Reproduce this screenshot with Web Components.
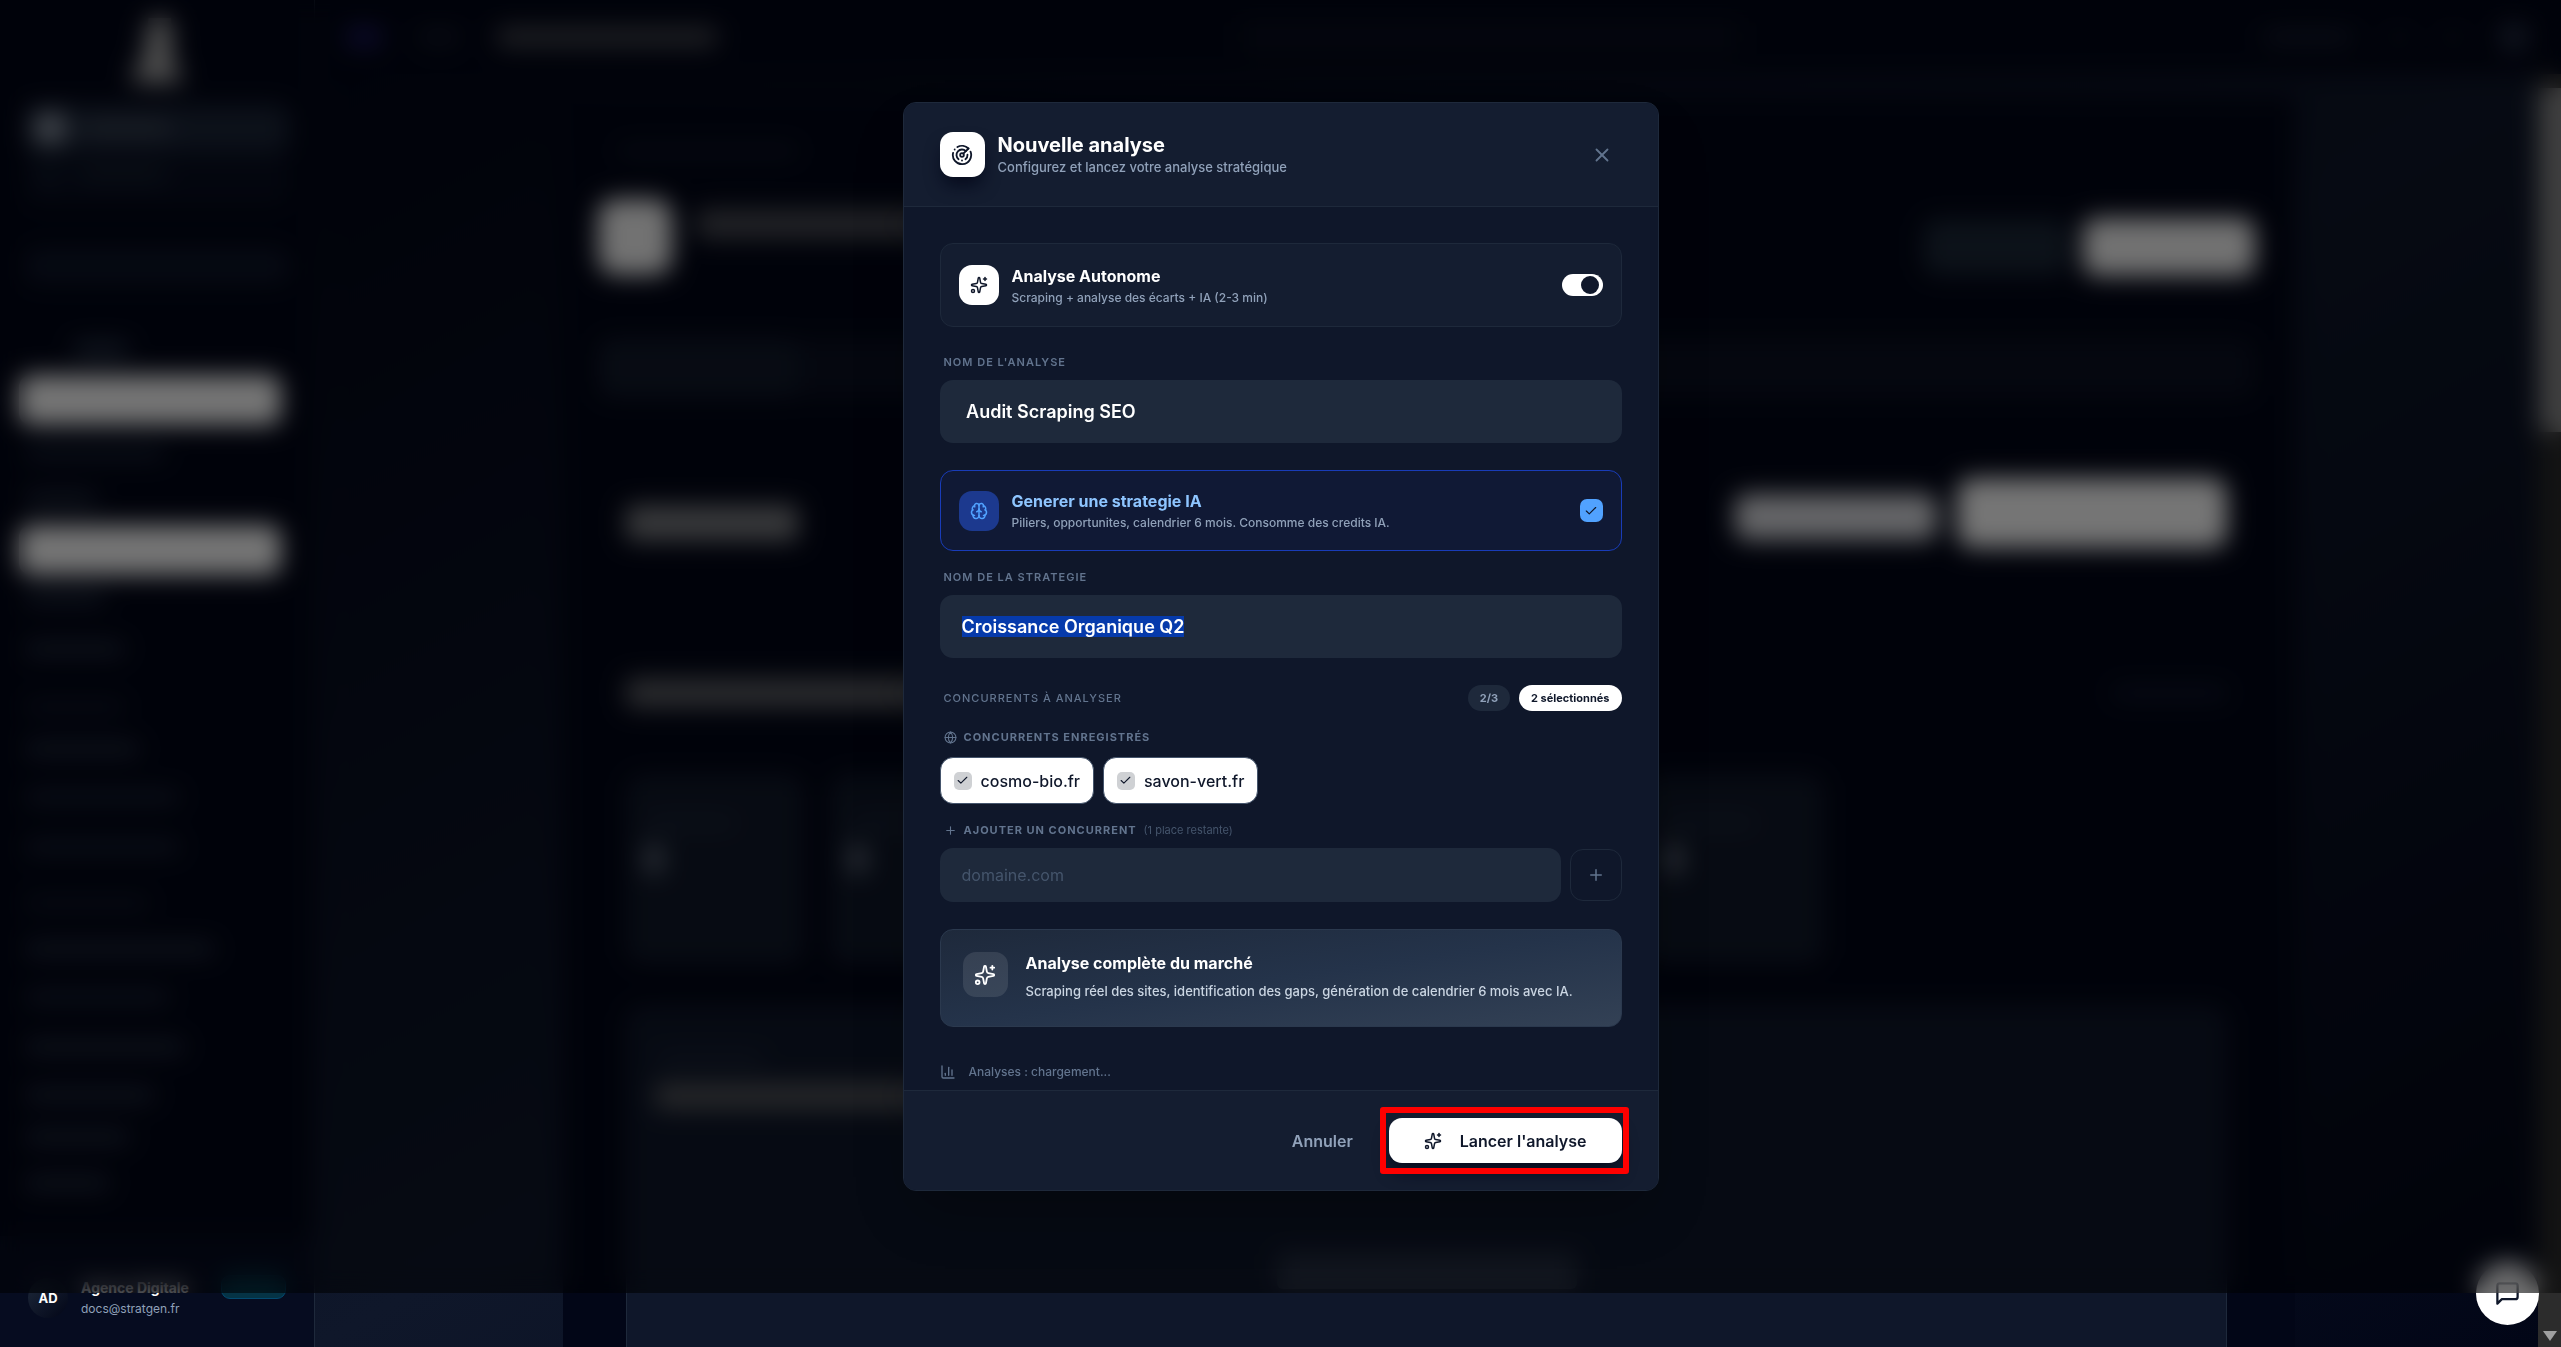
<!DOCTYPE html>
<html lang="fr">
<head>
<meta charset="utf-8">
<title>Nouvelle analyse</title>
<style>
	html, body {
		margin: 0;
		height: 100%;
		overflow: hidden;
	}
	body {
		position: relative;
		background: #020617;
		color: #ffffff;
		font-family: Inter, "Liberation Sans", sans-serif;
	}
</style>
</head>
<body>
<app-shell></app-shell>
<modal-dialog>
	<option-card icon="sparkles" control="switch" heading="Analyse Autonome" detail="Scraping + analyse des écarts + IA (2-3 min)"></option-card>
	<text-field label="Nom de l'analyse" value=" Audit Scraping SEO"></text-field>
	<div class="group">
		<option-card variant="blue" icon="brain" control="check" heading="Generer une strategie IA" detail="Piliers, opportunites, calendrier 6 mois. Consomme des credits IA."></option-card>
		<text-field label="Nom de la strategie" value="Croissance Organique Q2" selected></text-field>
	</div>
	<competitor-picker></competitor-picker>
	<info-banner heading="Analyse complète du marché">Scraping réel des sites, identification des gaps, génération de calendrier 6 mois avec IA.</info-banner>
	<quota-line slot="status">Analyses : chargement...</quota-line>
</modal-dialog>

<script>
const icons = {
	radar: '<path d="M19.07 4.93A10 10 0 0 0 6.99 3.34"/><path d="M4 6h.01"/><path d="M2.29 9.62A10 10 0 1 0 21.31 8.35"/><path d="M16.24 7.76A6 6 0 1 0 8.23 16.67"/><path d="M12 18h.01"/><path d="M17.99 11.66A6 6 0 0 1 15.77 16.67"/><circle cx="12" cy="12" r="2"/><path d="m13.41 10.59 5.66-5.66"/>',
	sparkles: '<path d="M11.017 2.814a1 1 0 0 1 1.966 0l1.051 5.558a2 2 0 0 0 1.594 1.594l5.558 1.051a1 1 0 0 1 0 1.966l-5.558 1.051a2 2 0 0 0-1.594 1.594l-1.051 5.558a1 1 0 0 1-1.966 0l-1.051-5.558a2 2 0 0 0-1.594-1.594l-5.558-1.051a1 1 0 0 1 0-1.966l5.558-1.051a2 2 0 0 0 1.594-1.594z"/><path d="M20 2v4"/><path d="M22 4h-4"/><circle cx="4" cy="20" r="2"/>',
	brain: '<path d="M12 18V5"/><path d="M15 13a4.17 4.17 0 0 1-3-4 4.17 4.17 0 0 1-3 4"/><path d="M17.598 6.5A3 3 0 1 0 12 5a3 3 0 1 0-5.598 1.5"/><path d="M17.997 5.125a4 4 0 0 1 2.526 5.77"/><path d="M18 18a4 4 0 0 0 2-7.464"/><path d="M19.967 17.483A4 4 0 1 1 12 18a4 4 0 1 1-7.967-.517"/><path d="M6 18a4 4 0 0 1-2-7.464"/><path d="M6.003 5.125a4 4 0 0 0-2.526 5.77"/>',
	globe: '<circle cx="12" cy="12" r="10"/><path d="M12 2a14.5 14.5 0 0 0 0 20 14.5 14.5 0 0 0 0-20"/><path d="M2 12h20"/>',
	chart: '<path d="M3 3v16a2 2 0 0 0 2 2h16"/><path d="M18 17V9"/><path d="M13 17V5"/><path d="M8 17v-3"/>',
	message: '<path d="M21 15a2 2 0 0 1-2 2H7l-4 4V5a2 2 0 0 1 2-2h14a2 2 0 0 1 2 2z"/>',
	check: '<path d="M20 6 9 17l-5-5"/>',
	plus: '<path d="M5 12h14"/><path d="M12 5v14"/>',
	close: '<path d="M18 6 6 18"/><path d="m6 6 12 12"/>'
}

class BaseElement extends HTMLElement {
	constructor() {
		super()
		this.attachShadow({ mode: 'open' })
	}
	connectedCallback() {
		this.shadowRoot.innerHTML = this.template()
	}
	template() {
		return '<slot></slot>'
	}
}

class UiIcon extends BaseElement {
	template() {
		const size = this.getAttribute('size') || 18
		return `
			<style>
				:host { display: block; flex: none; }
				svg { display: block; }
			</style>
			<svg width="${size}" height="${size}" viewBox="0 0 24 24" fill="none" stroke="currentColor" stroke-width="2" stroke-linecap="round" stroke-linejoin="round" aria-hidden="true">${icons[this.getAttribute('name')]}</svg>
		`
	}
}

/* placeholder bar for the content that lies under the overlay */
class GhostBlock extends BaseElement {
	template() {
		return `
			<style>
				:host {
					display: block;
					flex: none;
					box-sizing: border-box;
					width: var(--w, 100%);
					height: var(--h, 12px);
					margin-top: var(--t, 0);
					border-radius: var(--r, 6px);
					background: var(--c, #334155);
				}
			</style>
			<slot></slot>
		`
	}
}

class SideBar extends BaseElement {
	template() {
		return `
			<style>
				:host {
					display: flex;
					flex-direction: column;
					box-sizing: border-box;
					border-right: 1px solid #1e293b;
					background: #020617;
					min-height: 0;
				}
				nav {
					flex: 1;
					min-height: 0;
					overflow: hidden;
					padding: 18px 25px 0;
				}
				.logo {
					margin: 0 auto;
					clip-path: polygon(35% 0, 75% 0, 80% 70%, 100% 100%, 0 100%, 25% 60%);
				}
				.account {
					height: 100px;
					margin-top: 22px;
					border-radius: 12px;
					background: #080e20;
				}
				.row {
					display: flex;
					align-items: center;
					gap: 16px;
					height: 46px;
					padding: 0 10px;
					border-radius: 12px;
				}
				.row.active { background: #1c2639; }
				.pill { margin-left: -6px; }
				.user {
					display: flex;
					align-items: center;
					gap: 13px;
					padding: 39px 28px 26px;
					background: #060c20;
				}
				.avatar {
					display: flex;
					align-items: center;
					justify-content: center;
					width: 40px;
					height: 40px;
					border-radius: 50%;
					background: linear-gradient(135deg, #1e293b, #020617);
					font-size: 13px;
					font-weight: 700;
				}
				.who {
					flex: 1;
					font-size: 12px;
					line-height: 18px;
					color: #90a1b9;
				}
				.who strong {
					display: block;
					margin-bottom: 2px;
					font-size: 14px;
					line-height: 20px;
					color: #ffffff;
				}
				.plan {
					box-sizing: border-box;
					width: 65px;
					height: 24px;
					margin-bottom: 22px;
					border: 1px solid #024a70;
					border-radius: 9px;
					background: #053345;
				}
			</style>
			<nav>
				<ghost-block class="logo" style="--w:56px;--h:65px;--c:#a8a8a8"></ghost-block>
				<div class="account">
					<div class="row active">
						<ghost-block style="--w:30px;--h:30px;--c:#8f98a6"></ghost-block>
						<ghost-block style="--w:90px;--h:14px;--c:#3d4656"></ghost-block>
					</div>
					<div class="row">
						<ghost-block style="--w:26px;--h:26px;--c:#111a2b"></ghost-block>
						<ghost-block style="--w:90px;--h:12px;--c:#1d2637"></ghost-block>
					</div>
				</div>
				<ghost-block style="--t:44px;--h:34px;--c:#0f172a;--r:12px"></ghost-block>
				<ghost-block style="--t:60px;--w:56px;margin-left:48px"></ghost-block>
				<ghost-block class="pill" style="--t:20px;--w:262px;--h:50px;--c:#ffffff;--r:12px"></ghost-block>
				<ghost-block style="--t:22px;--w:140px;--c:#1e293b"></ghost-block>
				<ghost-block style="--t:34px;--w:72px;--c:#283244"></ghost-block>
				<ghost-block class="pill" style="--t:20px;--w:262px;--h:50px;--c:#ffffff;--r:12px"></ghost-block>
				<ghost-block style="--t:16px;--w:80px;--c:#283244"></ghost-block>
				<ghost-block style="--t:40px;--w:100px;--c:#283244"></ghost-block>
				<ghost-block style="--t:46px;--w:100px;--c:#141c2e"></ghost-block>
				<ghost-block style="--t:30px;--w:115px;--c:#283244"></ghost-block>
				<ghost-block style="--t:36px;--w:155px;--c:#1e293b"></ghost-block>
				<ghost-block style="--t:38px;--w:155px;--c:#1e293b"></ghost-block>
				<ghost-block style="--t:44px;--w:125px;--c:#141c2e"></ghost-block>
				<ghost-block style="--t:34px;--w:190px;--c:#283244"></ghost-block>
				<ghost-block style="--t:36px;--w:145px;--c:#1e293b"></ghost-block>
				<ghost-block style="--t:38px;--w:160px;--c:#283244"></ghost-block>
				<ghost-block style="--t:36px;--w:130px;--c:#283244"></ghost-block>
				<ghost-block style="--t:30px;--w:105px;--c:#283244"></ghost-block>
				<ghost-block style="--t:34px;--w:85px;--c:#283244"></ghost-block>
			</nav>
			<div class="user">
				<div class="avatar">AD</div>
				<div class="who"><strong>Agence Digitale</strong>docs@stratgen.fr</div>
				<div class="plan"></div>
			</div>
		`
	}
}

class AppShell extends BaseElement {
	template() {
		const stats = Array.from({ length: 6 }, () => `
			<ghost-block class="stat" style="--h:190px;--c:#11192a;--r:16px">
				<ghost-block style="--w:90px;--h:10px;--c:#1e293b"></ghost-block>
				<ghost-block style="--t:16px;--w:16px;--h:30px;--c:#6b7484"></ghost-block>
			</ghost-block>
		`).join('')

		return `
			<style>
				:host {
					display: grid;
					grid-template-columns: 315px 1fr;
					grid-template-rows: 74px 1fr;
					height: 100vh;
				}
				side-bar { grid-row: 1 / 3; }
				header {
					display: flex;
					align-items: center;
					gap: 38px;
					padding: 0 32px;
					background: #020617;
				}
				header .search { margin: 0 auto; }
				.main {
					display: grid;
					grid-template-columns: 1fr 23px;
					min-height: 0;
				}
				.canvas {
					display: flex;
					justify-content: center;
					min-height: 0;
					overflow: hidden;
					background: linear-gradient(to bottom right, #020617, #0f172a, #020617);
				}
				.page {
					display: flex;
					flex-direction: column;
					box-sizing: border-box;
					flex: 1;
					margin: 22px 243px 0 248px;
					padding: 50px 40px 0 35px;
					background: #020617;
				}
				.line {
					display: flex;
					align-items: center;
					gap: 14px;
				}
				.push { margin-left: auto; }
				.inner {
					display: flex;
					flex-direction: column;
					flex: 1;
					padding: 80px 28px 0;
				}
				.stats {
					display: grid;
					grid-template-columns: repeat(6, 178px);
					gap: 26px;
					margin-top: 66px;
				}
				.stat {
					padding: 44px 20px;
				}
				.panel {
					flex: 1;
					margin-top: 42px;
					padding: 46px 28px;
					border: 1px solid #1e293b;
					border-bottom: 0;
					border-radius: 16px 16px 0 0;
					background: #0f172a;
				}
				.panel .empty { margin: 144px auto 0; }
				.scroll {
					display: flex;
					flex-direction: column;
					justify-content: space-between;
					align-items: center;
					background: #2c2c2c;
				}
				.arrow {
					width: 0;
					height: 0;
					margin-bottom: 6px;
					border: 7px solid transparent;
					border-top: 10px solid #9f9f9f;
					border-bottom: 0;
				}
				/* floats over the page corner */
				.chat {
					position: absolute;
					right: 22px;
					bottom: 22px;
					display: flex;
					align-items: center;
					justify-content: center;
					width: 63px;
					height: 63px;
					padding: 0;
					border: 0;
					border-radius: 50%;
					background: #ffffff;
					color: #0f172a;
				}
			</style>
			<side-bar></side-bar>
			<header>
				<ghost-block style="--w:34px;--h:18px;--c:#1f1a66"></ghost-block>
				<ghost-block style="--w:40px;--c:#1b2233"></ghost-block>
				<ghost-block style="--w:220px;--h:20px;--c:#44464e"></ghost-block>
				<ghost-block class="search" style="--w:500px;--h:36px;--c:#080d1e"></ghost-block>
				<ghost-block style="--w:90px;--c:#1c2436"></ghost-block>
				<ghost-block style="--w:16px;--c:#141c2e"></ghost-block>
				<ghost-block style="--w:16px;--c:#141c2e"></ghost-block>
				<ghost-block style="--w:30px;--h:30px;--c:#252e44;--r:15px"></ghost-block>
			</header>
			<div class="main">
				<div class="canvas">
					<div class="page">
						<ghost-block style="--w:180px;--h:10px;--c:#141c2e;margin-left:20px"></ghost-block>
						<div class="line" style="margin-top:42px">
							<ghost-block style="--w:74px;--h:76px;--c:#f8f8f8;--r:18px"></ghost-block>
							<ghost-block style="--w:320px;--h:30px;--c:#4a4c54;margin:0 0 26px 10px"></ghost-block>
							<ghost-block class="push" style="--t:20px;--w:146px;--h:56px;--c:#1c2838;--r:14px"></ghost-block>
							<ghost-block style="--t:20px;--w:172px;--h:58px;--c:#f8f8f8;--r:14px"></ghost-block>
						</div>
						<ghost-block style="--t:62px;--h:60px;--c:#0b1122;--r:14px">
							<ghost-block style="--t:0px;--w:200px;--h:60px;--c:#121a2b;--r:14px"></ghost-block>
						</ghost-block>
						<div class="inner">
							<div class="line">
								<ghost-block style="--t:20px;--w:172px;--h:36px;--c:#7a7c80"></ghost-block>
								<ghost-block class="push" style="--t:8px;--w:202px;--h:46px;--c:#dcdde2;--r:12px;"></ghost-block>
								<ghost-block style="--w:270px;--h:70px;--c:#ffffff;--r:16px;margin-left:6px"></ghost-block>
							</div>
							<div class="line" style="margin-top:130px">
								<ghost-block style="--w:400px;--h:30px;--c:#5c5e64"></ghost-block>
								<ghost-block class="push" style="--w:115px;--c:#141b33"></ghost-block>
							</div>
							<div class="stats">${stats}</div>
							<div class="panel">
								<ghost-block style="--w:110px;--h:10px;--c:#1e293b"></ghost-block>
								<ghost-block style="--t:20px;--w:330px;--h:26px;--c:#55575c"></ghost-block>
								<ghost-block class="empty" style="--w:300px;--h:36px;--c:#273042"></ghost-block>
							</div>
						</div>
					</div>
				</div>
				<div class="scroll">
					<ghost-block style="--t:14px;--h:344px;--w:23px;--r:0;--c:#8a8a8a"></ghost-block>
					<div class="arrow"></div>
				</div>
			</div>
			<button class="chat" type="button" aria-label="Chat"><ui-icon name="message" size="27"></ui-icon></button>
		`
	}
}

class OptionCard extends BaseElement {
	template() {
		const control = this.getAttribute('control') === 'switch'
			? '<input class="switch" type="checkbox" role="switch" checked>'
			: '<span class="box"><input class="check" type="checkbox" checked><ui-icon name="check" size="14"></ui-icon></span>'

		return `
			<style>
				:host { display: block; }
				label {
					display: flex;
					align-items: center;
					gap: 13px;
					box-sizing: border-box;
					min-height: 84px;
					padding: 0 18px;
					border: 1px solid #1e293b;
					border-radius: 13px;
					background: #141d30;
				}
				.icon {
					display: flex;
					align-items: center;
					justify-content: center;
					width: 40px;
					height: 40px;
					border-radius: 13px;
					background: #ffffff;
					color: #0f172a;
				}
				.text {
					flex: 1;
					font-size: 12px;
					font-weight: 500;
					line-height: 18px;
					color: #90a1b9;
				}
				strong {
					display: block;
					margin-bottom: 1px;
					font-size: 16px;
					font-weight: 700;
					line-height: 24px;
					color: #ffffff;
				}
				input {
					appearance: none;
					margin: 0;
				}
				.switch {
					display: flex;
					justify-content: flex-end;
					box-sizing: border-box;
					width: 41px;
					height: 22px;
					padding: 2px 4px;
					border-radius: 11px;
					background: #ffffff;
				}
				.switch::before {
					content: "";
					width: 18px;
					height: 18px;
					border-radius: 50%;
					background: #0f172a;
				}
				.box {
					display: grid;
					place-items: center;
					color: #0f172a;
				}
				.box > * { grid-area: 1 / 1; }
				.check {
					width: 23px;
					height: 23px;
					border-radius: 7px;
					background: #51a2ff;
				}
				:host([variant="blue"]) label {
					min-height: 81px;
					border-color: #193cb8;
					background: #101935;
				}
				:host([variant="blue"]) .icon {
					background: #1c398e;
					color: #51a2ff;
				}
				:host([variant="blue"]) strong { color: #8ec5ff; }
			</style>
			<label>
				<span class="icon"><ui-icon name="${this.getAttribute('icon')}" size="18"></ui-icon></span>
				<span class="text"><strong>${this.getAttribute('heading')}</strong>${this.getAttribute('detail')}</span>
				${control}
			</label>
		`
	}
}

class TextField extends BaseElement {
	template() {
		return `
			<style>
				:host { display: block; }
				label {
					display: block;
					margin: 0 4px 9px;
					font-size: 11px;
					font-weight: 600;
					line-height: 17px;
					letter-spacing: 1px;
					text-transform: uppercase;
					color: #62748e;
				}
				input {
					box-sizing: border-box;
					display: block;
					width: 100%;
					height: 63px;
					padding: 0 22px;
					border: 0;
					border-radius: 13px;
					outline: 0;
					background: #1e293b;
					color: #ffffff;
					font: 600 18px/27px Inter, "Liberation Sans", sans-serif;
				}
				input::selection {
					background: #063aab;
					color: #ffffff;
				}
			</style>
			<label for="field">${this.getAttribute('label')}</label>
			<input id="field" type="text" value="${this.getAttribute('value')}">
		`
	}
	connectedCallback() {
		super.connectedCallback()
		if (this.hasAttribute('selected')) {
			const $input = this.shadowRoot.querySelector('input')
			$input.focus()
			$input.select()
		}
	}
}

class DomainChip extends BaseElement {
	template() {
		return `
			<style>
				:host { display: block; }
				label {
					display: flex;
					align-items: center;
					gap: 9px;
					box-sizing: border-box;
					height: 47px;
					padding: 0 13px;
					border: 1px solid #45556c;
					border-radius: 13px;
					background: #ffffff;
					color: #0f172a;
					font-size: 16px;
					font-weight: 500;
				}
				.box {
					display: grid;
					place-items: center;
				}
				.box > * { grid-area: 1 / 1; }
				input {
					appearance: none;
					width: 18px;
					height: 18px;
					margin: 0;
					border-radius: 5px;
					background: #cfd1d4;
				}
			</style>
			<label>
				<span class="box"><input type="checkbox" checked><ui-icon name="check" size="13"></ui-icon></span>
				<slot></slot>
			</label>
		`
	}
}

class CompetitorPicker extends BaseElement {
	template() {
		return `
			<style>
				:host { display: block; }
				.top {
					display: flex;
					align-items: center;
					gap: 9px;
					height: 26px;
				}
				.title {
					flex: 1;
					padding-left: 4px;
					font-size: 11px;
					font-weight: 500;
					letter-spacing: 1px;
					color: #62748e;
				}
				.pill {
					padding: 0 12px;
					border-radius: 13px;
					background: #1e293b;
					color: #90a1b9;
					font-size: 11px;
					font-weight: 700;
					line-height: 26px;
				}
				.pill.full {
					background: #ffffff;
					color: #0f172a;
				}
				.sub {
					display: flex;
					align-items: center;
					gap: 7px;
					margin-top: 18px;
					padding-left: 4px;
					font-size: 11px;
					font-weight: 700;
					line-height: 17px;
					letter-spacing: 1px;
					color: #62748e;
				}
				.sub small {
					font-size: 11px;
					font-weight: 400;
					letter-spacing: 0;
					color: #45556c;
				}
				.chips {
					display: flex;
					gap: 9px;
					margin-top: 11px;
				}
				.add {
					display: flex;
					align-items: center;
					gap: 9px;
					margin-top: 9px;
				}
				input {
					flex: 1;
					box-sizing: border-box;
					height: 54px;
					padding: 0 22px;
					border: 0;
					border-radius: 13px;
					background: #1e293b;
					color: #ffffff;
					font: 400 16px/24px Inter, "Liberation Sans", sans-serif;
				}
				input::placeholder { color: #45556c; }
				button {
					display: flex;
					align-items: center;
					justify-content: center;
					width: 52px;
					height: 52px;
					padding: 0;
					border: 1px solid #1e293b;
					border-radius: 13px;
					background: transparent;
					color: #62748e;
				}
			</style>
			<div class="top">
				<span class="title">CONCURRENTS À ANALYSER</span>
				<span class="pill">2/3</span>
				<span class="pill full">2 sélectionnés</span>
			</div>
			<div class="sub"><ui-icon name="globe" size="13"></ui-icon>CONCURRENTS ENREGISTRÉS</div>
			<div class="chips">
				<domain-chip>cosmo-bio.fr</domain-chip>
				<domain-chip>savon-vert.fr</domain-chip>
			</div>
			<label class="sub" for="domain"><ui-icon name="plus" size="13"></ui-icon>AJOUTER UN CONCURRENT <small>(1 place restante)</small></label>
			<div class="add">
				<input id="domain" type="text" placeholder="domaine.com">
				<button type="button" aria-label="Ajouter"><ui-icon name="plus" size="18"></ui-icon></button>
			</div>
		`
	}
}

class InfoBanner extends BaseElement {
	template() {
		return `
			<style>
				:host {
					display: flex;
					align-items: flex-start;
					gap: 18px;
					box-sizing: border-box;
					min-height: 98px;
					padding: 22px;
					border: 1px solid #2b394e;
					border-radius: 13px;
					background: linear-gradient(to bottom right, #1e293b, #24334a, #334155);
					color: #cad5e2;
					font-size: 13px;
					font-weight: 500;
					line-height: 22px;
				}
				.icon {
					display: flex;
					align-items: center;
					justify-content: center;
					flex: none;
					width: 45px;
					height: 45px;
					border-radius: 13px;
					background: rgba(255, 255, 255, .1);
					color: #ffffff;
				}
				strong {
					display: block;
					margin-bottom: 6px;
					font-size: 16px;
					font-weight: 700;
					color: #ffffff;
				}
			</style>
			<span class="icon"><ui-icon name="sparkles" size="22"></ui-icon></span>
			<div><strong>${this.getAttribute('heading')}</strong><slot></slot></div>
		`
	}
}

class QuotaLine extends BaseElement {
	template() {
		return `
			<style>
				:host {
					display: flex;
					align-items: center;
					gap: 13px;
					font-size: 12px;
					font-weight: 500;
					line-height: 18px;
					color: #62748e;
				}
			</style>
			<ui-icon name="chart" size="16"></ui-icon>
			<slot></slot>
		`
	}
}

class ModalDialog extends BaseElement {
	template() {
		return `
			<style>
				/* covers the app, short of its last rows */
				:host {
					position: absolute;
					inset: 0 0 54px;
					display: flex;
					align-items: center;
					justify-content: center;
				}
				/* blurs the full window, then clips back to the host's box */
				.backdrop {
					position: absolute;
					inset: 0 0 -54px;
					clip-path: inset(0 0 54px);
					background: rgba(0, 0, 0, .54);
					backdrop-filter: blur(12px);
				}
				.dialog {
					position: relative;
					box-sizing: border-box;
					width: 756px;
					max-width: 100%;
					overflow: hidden;
					border: 1px solid #1e293b;
					border-radius: 13px;
					background: #0f172a;
					box-shadow: 0 28px 56px -14px rgba(0, 0, 0, .3);
				}
				header {
					display: flex;
					align-items: center;
					gap: 13px;
					padding: 29px 36px;
					border-bottom: 1px solid #1e293b;
					background: #141d30;
				}
				.icon {
					display: flex;
					align-items: center;
					justify-content: center;
					width: 45px;
					height: 45px;
					border-radius: 13px;
					background: #ffffff;
					color: #0f172a;
					box-shadow: 0 11px 17px -3px rgba(2, 6, 24, .8);
				}
				.titles { flex: 1; }
				h1 {
					margin: 0;
					font-size: 20px;
					font-weight: 700;
					line-height: 26px;
				}
				p {
					margin: 0;
					font-size: 13px;
					font-weight: 500;
					line-height: 19px;
					color: #90a1b9;
				}
				button {
					border: 0;
					border-radius: 13px;
					background: transparent;
					font: 600 16px/24px Inter, "Liberation Sans", sans-serif;
				}
				.close {
					padding: 9px;
					color: #62748e;
				}
				.body {
					display: flex;
					flex-direction: column;
					gap: 27px;
					padding: 36px 36px 9px;
				}
				::slotted(.group) {
					display: flex;
					flex-direction: column;
					gap: 18px;
				}
				::slotted([slot="status"]) { margin-top: 9px; }
				footer {
					display: flex;
					align-items: center;
					justify-content: flex-end;
					gap: 9px;
					padding: 27px 36px;
					border-top: 1px solid #1e293b;
					background: #141d30;
				}
				.cancel {
					height: 45px;
					padding: 0 27px;
					color: #90a1b9;
				}
				.launch {
					position: relative;
				}
				.launch button {
					display: flex;
					align-items: center;
					gap: 18px;
					height: 45px;
					padding: 0 35px;
					background: #ffffff;
					color: #0f172a;
					box-shadow: 0 11px 17px -3px rgba(2, 6, 24, .8);
				}
				/* highlight ring drawn over the launch button */
				.launch::after {
					content: "";
					position: absolute;
					inset: -11px -7px -11px -9px;
					border: 6px solid #ff0000;
					border-radius: 3px;
					pointer-events: none;
				}
			</style>
			<div class="backdrop"></div>
			<div class="dialog" role="dialog" aria-labelledby="title">
				<header>
					<span class="icon"><ui-icon name="radar" size="22"></ui-icon></span>
					<div class="titles">
						<h1 id="title">Nouvelle analyse</h1>
						<p>Configurez et lancez votre analyse stratégique</p>
					</div>
					<button class="close" type="button" aria-label="Fermer"><ui-icon name="close" size="22"></ui-icon></button>
				</header>
				<div class="body">
					<slot></slot>
					<slot name="status"></slot>
				</div>
				<footer>
					<button class="cancel" type="button">Annuler</button>
					<div class="launch"><button type="button"><ui-icon name="sparkles" size="18"></ui-icon>Lancer l'analyse</button></div>
				</footer>
			</div>
		`
	}
}

customElements.define('ui-icon', UiIcon)
customElements.define('ghost-block', GhostBlock)
customElements.define('side-bar', SideBar)
customElements.define('app-shell', AppShell)
customElements.define('option-card', OptionCard)
customElements.define('domain-chip', DomainChip)
customElements.define('competitor-picker', CompetitorPicker)
customElements.define('info-banner', InfoBanner)
customElements.define('quota-line', QuotaLine)
customElements.define('modal-dialog', ModalDialog)
customElements.define('text-field', TextField)
</script>
</body>
</html>
